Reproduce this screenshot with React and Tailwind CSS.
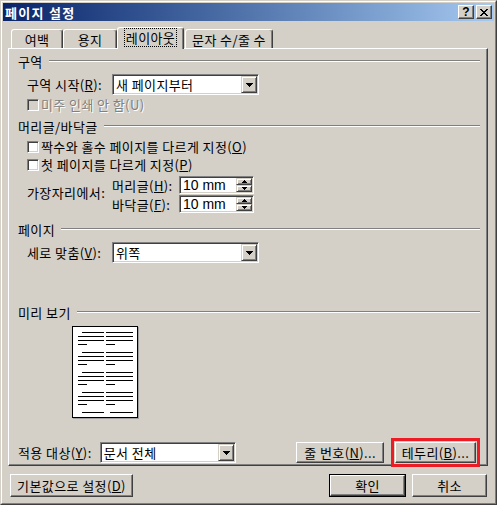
import React from "react"

const raised =
    "border border-t-white border-l-white border-r-[#404040] border-b-[#404040] shadow-[inset_-1px_-1px_0_#808080] bg-[#d4d0c8]"
const raisedSmall =
    "border border-t-[#d4d0c8] border-l-[#d4d0c8] border-r-[#404040] border-b-[#404040] shadow-[inset_1px_1px_0_#ffffff,inset_-1px_-1px_0_#808080] bg-[#d4d0c8]"
const sunken =
    "border border-t-[#808080] border-l-[#808080] border-r-white border-b-white shadow-[inset_1px_1px_0_#404040,inset_-1px_-1px_0_#d4d0c8]"

function Group({ title, className = "" }) {
    return (
        <div className={`flex items-center h-[12px] ${className}`}>
            <span>{title}</span>
            <div className="flex-1 ml-[6px] h-[2px] border-t border-b border-t-[#808080] border-b-white" />
        </div>
    )
}

function Arrow({ up = false }) {
    return (
        <svg width="7" height="4" viewBox="0 0 7 4" className={up ? "rotate-180" : ""}>
            <rect x="0" y="0" width="7" height="1" fill="black" />
            <rect x="1" y="1" width="5" height="1" fill="black" />
            <rect x="2" y="2" width="3" height="1" fill="black" />
            <rect x="3" y="3" width="1" height="1" fill="black" />
        </svg>
    )
}

function Combo({ value, className = "" }) {
    return (
        <div className={`flex h-[21px] bg-white p-px ${sunken} ${className}`}>
            <span className="flex-1 flex items-center pl-[2px]">{value}</span>
            <div className={`w-[16px] h-full flex items-center justify-center ${raisedSmall}`}>
                <Arrow />
            </div>
        </div>
    )
}

function SmallArrow({ up = false }) {
    return (
        <svg width="5" height="3" viewBox="0 0 5 3" className={up ? "rotate-180" : ""}>
            <rect x="0" y="0" width="5" height="1" fill="black" />
            <rect x="1" y="1" width="3" height="1" fill="black" />
            <rect x="2" y="2" width="1" height="1" fill="black" />
        </svg>
    )
}

function Spin({ value }) {
    return (
        <div className={`flex w-[75px] h-[18px] bg-white p-px ${sunken}`}>
            <span className="flex-1 flex items-center pl-[2px] text-[14px] tracking-normal font-['Liberation_Sans',sans-serif]">
                {value}
            </span>
            <div className="w-[16px] h-full flex flex-col">
                <div className={`flex-1 flex items-center justify-center ${raisedSmall}`}>
                    <SmallArrow up />
                </div>
                <div className={`flex-1 flex items-center justify-center ${raisedSmall}`}>
                    <SmallArrow />
                </div>
            </div>
        </div>
    )
}

function Check({ children, disabled = false, className = "" }) {
    return (
        <div className={`flex items-center h-[13px] ml-[9px] ${className}`}>
            <span className={`w-[12px] h-[12px] shrink-0 ${sunken} ${disabled ? "bg-[#d4d0c8]" : "bg-white"}`} />
            <span className={`ml-[2px] ${disabled ? "text-[#808080] [text-shadow:1px_1px_0_#ffffff]" : ""}`}>
                {children}
            </span>
        </div>
    )
}

function Button({ children, className = "" }) {
    return <div className={`flex items-center justify-center ${raised} ${className}`}>{children}</div>
}

function PreviewPage() {
    const groups = [0, 20, 40, 60]
    return (
        <div className="w-[66px] h-[92px] border border-black bg-white ml-[54px] mt-[8px] shadow-[1px_1px_0_#a0a0a0]">
            <svg width="64" height="90" viewBox="0 0 64 90">
                {groups.map((g) => (
                    <g key={g} fill="black">
                        <rect x="9" y={5 + g} width="22" height="1" />
                        <rect x="5" y={9 + g} width="26" height="1" />
                        <rect x="5" y={13 + g} width="26" height="1" />
                        <rect x="5" y={17 + g} width="9" height="1" />
                        <rect x="33" y={5 + g} width="27" height="1" />
                        <rect x="33" y={9 + g} width="27" height="1" />
                        <rect x="33" y={13 + g} width="27" height="1" />
                        <rect x="33" y={17 + g} width="9" height="1" />
                    </g>
                ))}
                <rect x="9" y="85" width="22" height="1" fill="black" />
                <rect x="37" y="85" width="23" height="1" fill="black" />
            </svg>
        </div>
    )
}

export default function App() {
    const tab =
        "h-[19px] flex items-center justify-center border-t border-l border-r border-t-white border-l-white border-r-[#404040] shadow-[inset_-1px_0_0_#808080] rounded-t-[3px]"

    return (
        <div className="w-[497px] h-[505px] bg-[#d4d0c8] border border-t-[#d4d0c8] border-l-[#d4d0c8] border-r-[#404040] border-b-[#404040] font-['Noto_Sans_CJK_KR','Noto_Sans',sans-serif] text-[13px] tracking-[0.4px] leading-none text-black select-none">
            <div className="h-full border border-t-white border-l-white border-r-[#808080] border-b-[#808080] p-px flex flex-col">
                {/* title bar */}
                <div className="h-[18px] flex items-center pl-[2px] pr-[2px] bg-linear-to-r from-[#0a246a] to-[#a6caf0]">
                    <span className="flex-1 font-bold text-white tracking-[1.3px]">페이지 설정</span>
                    <div className={`w-[16px] h-[14px] flex items-center justify-center ${raised}`}>
                        <span className="font-['Liberation_Sans',sans-serif] font-bold text-[12px]">?</span>
                    </div>
                    <div className={`w-[16px] h-[14px] ml-[2px] flex items-center justify-center ${raised}`}>
                        <svg width="8" height="7" viewBox="0 0 8 7" fill="black">
                            <rect x="0" y="0" width="2" height="1" />
                            <rect x="6" y="0" width="2" height="1" />
                            <rect x="1" y="1" width="2" height="1" />
                            <rect x="5" y="1" width="2" height="1" />
                            <rect x="2" y="2" width="4" height="1" />
                            <rect x="3" y="3" width="2" height="1" />
                            <rect x="2" y="4" width="4" height="1" />
                            <rect x="1" y="5" width="2" height="1" />
                            <rect x="5" y="5" width="2" height="1" />
                            <rect x="0" y="6" width="2" height="1" />
                            <rect x="6" y="6" width="2" height="1" />
                        </svg>
                    </div>
                </div>

                {/* tabs */}
                <div className="flex items-end h-[21px] mt-[6px] ml-[8px]">
                    <div className={`${tab} w-[52px]`}>여백</div>
                    <div className={`${tab} w-[54px]`}>용지</div>
                    <div className={`${tab} w-[67px] h-[22px] -mb-px relative z-10 bg-[#d4d0c8] pb-[2px]`}>
                        <span className="border border-dotted border-black px-[1px] py-[2px]">레이아웃</span>
                    </div>
                    <div className={`${tab} w-[88px] ml-px`}>문자 수/줄 수</div>
                </div>

                {/* panel */}
                <div className="w-[480px] h-[418px] ml-[5px] flex flex-col pl-[9px] pr-[7px] border border-t-white border-l-white border-r-[#404040] border-b-[#404040] shadow-[inset_-1px_-1px_0_#808080]">
                    <Group title="구역" className="mt-[6px]" />
                    <div className="flex items-center ml-[9px] mt-[7px]">
                        <span className="w-[85px]">
                            구역 시작(<u>R</u>):
                        </span>
                        <Combo value="새 페이지부터" className="w-[147px]" />
                    </div>
                    <Check disabled className="mt-[3px]">
                        미주 인쇄 안 함(U)
                    </Check>

                    <Group title="머리글/바닥글" className="mt-[9px]" />
                    <Check className="mt-[8px]">
                        짝수와 홀수 페이지를 다르게 지정(<u>O</u>)
                    </Check>
                    <Check className="mt-[5px]">
                        첫 페이지를 다르게 지정(<u>P</u>)
                    </Check>
                    <div className="flex items-center ml-[9px] mt-[5px]">
                        <span className="w-[85px] mb-[4px]">가장자리에서:</span>
                        <div className="flex flex-col gap-px">
                            <div className="flex items-center">
                                <span className="w-[67px]">
                                    머리글(<u>H</u>):
                                </span>
                                <Spin value="10 mm" />
                            </div>
                            <div className="flex items-center">
                                <span className="w-[67px]">
                                    바닥글(<u>F</u>):
                                </span>
                                <Spin value="10 mm" />
                            </div>
                        </div>
                    </div>

                    <Group title="페이지" className="mt-[10px]" />
                    <div className="flex items-center ml-[9px] mt-[7px]">
                        <span className="w-[85px]">
                            세로 맞춤(<u>V</u>):
                        </span>
                        <Combo value="위쪽" className="w-[147px]" />
                    </div>

                    <Group title="미리 보기" className="mt-[43px]" />
                    <PreviewPage />

                    <div className="flex items-center mt-[20px]">
                        <span className="w-[82px]">
                            적용 대상(<u>Y</u>):
                        </span>
                        <Combo value="문서 전체" className="w-[137px]" />
                        <Button className="w-[88px] h-[21px] ml-[60px]">
                            줄 번호(<u>N</u>)...
                        </Button>
                        <div className="ml-[7px] border-[3px] border-[#ed1c24] p-px">
                            <Button className="w-[81px] h-[21px]">
                                테두리(<u>B</u>)...
                            </Button>
                        </div>
                    </div>
                </div>

                {/* dialog buttons */}
                <div className="flex items-center mt-[8px]">
                    <Button className="w-[123px] h-[23px] ml-[7px]">
                        기본값으로 설정(<u>D</u>)
                    </Button>
                    <div className="ml-auto border border-black">
                        <Button className="w-[75px] h-[21px]">확인</Button>
                    </div>
                    <Button className="w-[75px] h-[23px] ml-[6px] mr-[7px]">취소</Button>
                </div>
            </div>
        </div>
    )
}
